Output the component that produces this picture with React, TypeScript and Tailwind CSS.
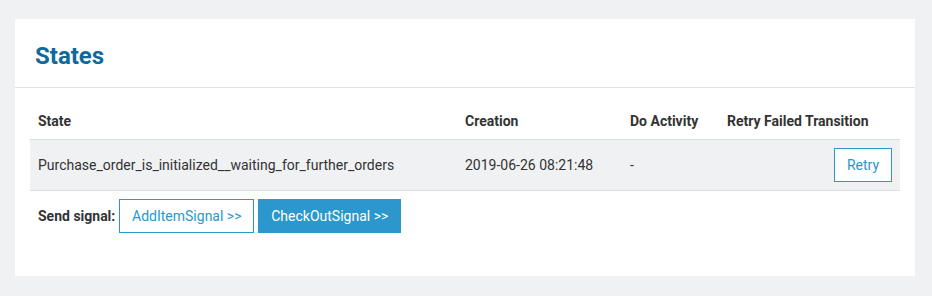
export default function App() {
  const rows = [
    {
      state: "Purchase_order_is_initialized__waiting_for_further_orders",
      creation: "2019-06-26 08:21:48",
      activity: "-",
    },
  ];

  return (
    <div className="min-h-[296px] bg-[#f0f1f3] px-[15px] pt-[19px] pb-5 font-['Roboto',sans-serif] text-[14px] text-[#333]">
      <div className="h-[257px] w-[900px] bg-white">
        <div className="flex h-[69px] items-center border-b border-[#e1e2e5] px-[20px] pt-[5px]">
          <h1 className="text-[24px] font-bold text-[#0f6a9b]">States</h1>
        </div>

        <div className="px-[15px] pt-[15px]">
          <table className="w-full table-fixed border-collapse">
            <colgroup>
              <col className="w-[427px]" />
              <col className="w-[165px]" />
              <col className="w-[97px]" />
              <col className="w-[181px]" />
            </colgroup>
            <thead>
              <tr className="border-b border-[#dcdde0] text-left">
                <th className="px-2 py-2 leading-5 font-bold">State</th>
                <th className="px-2 py-2 leading-5 font-bold">Creation</th>
                <th className="px-2 py-2 leading-5 font-bold">Do Activity</th>
                <th className="px-2 py-2 leading-5 font-bold whitespace-nowrap">Retry Failed Transition</th>
              </tr>
            </thead>
            <tbody>
              {rows.map((r, i) => (
                <tr key={i} className="border-b border-[#dcdde0] bg-[#f0f1f3]">
                  <td className="px-2 py-2 whitespace-nowrap">{r.state}</td>
                  <td className="px-2 py-2">{r.creation}</td>
                  <td className="px-2 py-2">{r.activity}</td>
                  <td className="px-2 py-2 text-right">
                    <button className="h-[34px] w-[58px] border border-[#2b97cd] bg-white text-[#2b97cd]">
                      Retry
                    </button>
                  </td>
                </tr>
              ))}
            </tbody>
          </table>

          <div className="mt-[8px] flex items-center gap-1 pl-2">
            <span className="font-bold">Send signal:</span>
            <button className="h-[34px] w-[135px] border border-[#2b97cd] bg-white text-[#2b97cd]">
              AddItemSignal &gt;&gt;
            </button>
            <button className="h-[34px] w-[143px] bg-[#2b97cd] text-white">
              CheckOutSignal &gt;&gt;
            </button>
          </div>
        </div>
      </div>
    </div>
  );
}
